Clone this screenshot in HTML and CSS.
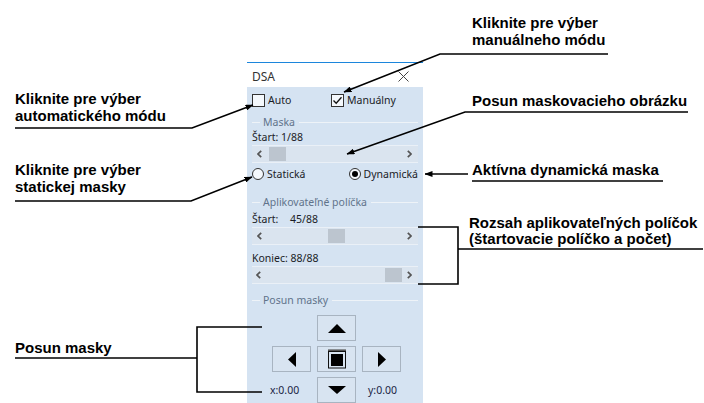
FILE: index.html
```html
<!DOCTYPE html>
<html lang="sk">

<head>
    <meta charset="UTF-8">
    <meta name="viewport" content="width=device-width, initial-scale=1.0">
    <link rel="stylesheet" href="styles.css">
    <title>DSA</title>
</head>

<body>
    <div class="canvas">
        <div class="panel">
            <div class="titlebar">
                <span class="title">DSA</span>
                <svg class="close" width="11" height="11" viewBox="0 0 11 11">
                    <path d="M0.5 0.5 L10.5 10.5 M10.5 0.5 L0.5 10.5" stroke="#444" stroke-width="1" fill="none" />
                </svg>
            </div>
            <div class="content">
                <div class="checks">
                    <label class="check first"><span class="box"></span>Auto</label>
                    <label class="check"><span class="box">
                            <svg width="11" height="11" viewBox="0 0 11 11">
                                <path d="M1.5 5.5 L4.2 8.3 L9.5 2.2" stroke="#111" stroke-width="1.3" fill="none" />
                            </svg>
                        </span>Manuálny</label>
                </div>

                <div class="group">Maska</div>
                <div class="field">Štart: 1/88</div>
                <div class="scroll">
                    <span class="arrow left">
                        <svg width="5" height="8" viewBox="0 0 5 8"><path d="M4.2 0.8 L1 4 L4.2 7.2" stroke="#555" stroke-width="1.7" fill="none" /></svg>
                    </span>
                    <div class="track"><span class="thumb" style="margin-left: 0px"></span></div>
                    <span class="arrow right">
                        <svg width="5" height="8" viewBox="0 0 5 8"><path d="M0.8 0.8 L4 4 L0.8 7.2" stroke="#555" stroke-width="1.7" fill="none" /></svg>
                    </span>
                </div>

                <div class="radios">
                    <label class="radio first"><span class="dot"></span>Statická</label>
                    <label class="radio on"><span class="dot"></span>Dynamická</label>
                </div>

                <div class="group second">Aplikovateľné políčka</div>
                <div class="field tight"><span class="key">Štart:</span>45/88</div>
                <div class="scroll">
                    <span class="arrow left">
                        <svg width="5" height="8" viewBox="0 0 5 8"><path d="M4.2 0.8 L1 4 L4.2 7.2" stroke="#555" stroke-width="1.7" fill="none" /></svg>
                    </span>
                    <div class="track"><span class="thumb" style="margin-left: 58.7px"></span></div>
                    <span class="arrow right">
                        <svg width="5" height="8" viewBox="0 0 5 8"><path d="M0.8 0.8 L4 4 L0.8 7.2" stroke="#555" stroke-width="1.7" fill="none" /></svg>
                    </span>
                </div>
                <div class="field end">Koniec: 88/88</div>
                <div class="scroll">
                    <span class="arrow left">
                        <svg width="5" height="8" viewBox="0 0 5 8"><path d="M4.2 0.8 L1 4 L4.2 7.2" stroke="#555" stroke-width="1.7" fill="none" /></svg>
                    </span>
                    <div class="track"><span class="thumb" style="margin-left: 116px"></span></div>
                    <span class="arrow right">
                        <svg width="5" height="8" viewBox="0 0 5 8"><path d="M0.8 0.8 L4 4 L0.8 7.2" stroke="#555" stroke-width="1.7" fill="none" /></svg>
                    </span>
                </div>

                <div class="group third">Posun masky</div>
                <div class="pad">
                    <button class="pad-btn up">
                        <svg width="18" height="9" viewBox="0 0 18 9"><path d="M9 0 L18 9 L0 9 z" /></svg>
                    </button>
                    <button class="pad-btn left">
                        <svg width="8" height="15" viewBox="0 0 8 15"><path d="M0 7.5 L8 0 L8 15 z" /></svg>
                    </button>
                    <button class="pad-btn center">
                        <svg width="20" height="20" viewBox="0 0 20 20">
                            <path d="M1 1.2 H19" stroke="#555" stroke-width="1.6" />
                            <rect x="1.5" y="2.5" width="17" height="16.5" fill="none" stroke="#111" stroke-width="1" />
                            <rect x="4" y="5" width="12" height="12" fill="#000" />
                        </svg>
                    </button>
                    <button class="pad-btn right">
                        <svg width="8" height="15" viewBox="0 0 8 15"><path d="M8 7.5 L0 0 L0 15 z" /></svg>
                    </button>
                    <span class="coord x">x:0.00</span>
                    <button class="pad-btn down">
                        <svg width="18" height="8" viewBox="0 0 18 8"><path d="M0 0 L18 0 L9 8 z" /></svg>
                    </button>
                    <span class="coord y">y:0.00</span>
                </div>
            </div>
        </div>

        <!-- callouts -->
        <div class="note n-manual">Kliknite pre výber<br>manuálneho módu</div>
        <div class="note n-shift">Posun maskovacieho obrázku</div>
        <div class="note n-active">Aktívna dynamická maska</div>
        <div class="note n-range">Rozsah aplikovateľných políčok<br>(štartovacie políčko a počet)</div>
        <div class="note n-auto">Kliknite pre výber<br>automatického módu</div>
        <div class="note n-static">Kliknite pre výber<br>statickej masky</div>
        <div class="note n-move">Posun masky</div>

        <svg class="leaders" width="704" height="403" viewBox="0 0 704 403">
            <defs>
                <marker id="tip" markerWidth="8" markerHeight="6" refX="7.5" refY="3" orient="auto" markerUnits="userSpaceOnUse">
                    <path d="M0 0 L8 3 L0 6 z" fill="#000" />
                </marker>
            </defs>
            <g stroke="#000" stroke-width="1.6" fill="none">
                <polyline points="608,54 440,54 344,92" marker-end="url(#tip)" />
                <polyline points="688,112 465,112 347,154" marker-end="url(#tip)" />
                <polyline points="468,174 425,174" marker-end="url(#tip)" />
                <polyline points="472,181 663,181" />
                <polyline points="15,128 192,128 253,105" marker-end="url(#tip)" />
                <polyline points="15,201 191,201 252,177" marker-end="url(#tip)" />
                <polyline points="418,227 458,227 458,284 418,284" />
                <polyline points="458,249 703,249" />
                <polyline points="15,358 197,358" />
                <polyline points="262,327 197,327 197,392 262,392" />
            </g>
        </svg>
    </div>
</body>

</html>
```

FILE: styles.css
```css
body {
    margin: 0;
    background: #fff;
    font-family: 'Noto Sans', sans-serif;
}

.canvas {
    position: relative;
    width: 704px;
    height: 403px;
    overflow: hidden;
    padding: 62px 0 0 247px;
    box-sizing: border-box;
}

/* DSA window */
.panel {
    width: 176px;
    height: 360px;
    background: #d5e3f2;
    border-top: 1px solid #1c86dc;
    font-size: 10.5px;
    color: #1a1c26;
}

.titlebar {
    height: 24px;
    background: #fff;
    display: flex;
    align-items: center;
    justify-content: space-between;
    padding: 3px 14px 0 5px;
    box-sizing: border-box;
}

.title {
    font-size: 12px;
    color: #333;
}

.content {
    padding: 6px 5px 0;
}

.checks,
.radios {
    display: flex;
    align-items: center;
    height: 14px;
}

.radios {
    margin-top: 4px;
}

.check,
.radio {
    display: flex;
    align-items: center;
    gap: 3px;
}

.check.first {
    width: 79px;
}

.radio.first {
    width: 98px;
}

.box {
    width: 11px;
    height: 11px;
    border: 1px solid #333;
    background: #f4f8fc;
    display: flex;
}

.dot {
    width: 10px;
    height: 10px;
    border: 1px solid #333;
    border-radius: 50%;
    background: #f4f8fc;
    display: flex;
    align-items: center;
    justify-content: center;
}

.radio.on .dot::after {
    content: "";
    width: 6px;
    height: 6px;
    border-radius: 50%;
    background: #000;
}

.group {
    display: flex;
    align-items: center;
    height: 14px;
    margin-top: 8px;
    color: #61738b;
}

.group::before,
.group::after {
    content: "";
    border-top: 1px solid #eef3f8;
}

.group::before {
    width: 8px;
    margin-right: 3px;
}

.group::after {
    flex: 1;
    margin-left: 4px;
}

.group.second {
    margin-top: 14px;
}

.group.third {
    margin-top: 9px;
}

.field {
    height: 16px;
    line-height: 16px;
}

.field.tight {
    margin-top: 2px;
}

.field.end {
    margin-top: 5px;
}

.key {
    display: inline-block;
    width: 38px;
}

.scroll {
    height: 18px;
    display: flex;
    align-items: center;
    background: #dae4ef;
    border-top: 1px solid #eaf0f7;
    border-bottom: 1px solid #eaf0f7;
    box-sizing: border-box;
}

.arrow {
    width: 17px;
    display: flex;
    justify-content: center;
}

.arrow.left {
    padding-right: 3px;
    box-sizing: border-box;
}

.track {
    flex: 1;
    display: flex;
    align-items: center;
}

.thumb {
    width: 17px;
    height: 14px;
    background: #bcc5cf;
}

/* direction pad */
.pad {
    display: grid;
    grid-template-columns: repeat(3, 39px);
    grid-template-rows: repeat(3, 26px);
    column-gap: 6px;
    row-gap: 5px;
    margin: 8px 0 0 20px;
}

.pad-btn {
    margin: 0;
    padding: 0;
    border: 1px solid #a8b4c1;
    background: #d8e4f1;
    display: flex;
    align-items: center;
    justify-content: center;
}

.pad-btn svg path {
    fill: #000;
}

.pad-btn.center svg path {
    fill: none;
}

.up {
    grid-column: 2;
    grid-row: 1;
}

.left {
    grid-column: 1;
    grid-row: 2;
}

.center {
    grid-column: 2;
    grid-row: 2;
}

.right {
    grid-column: 3;
    grid-row: 2;
}

.down {
    grid-column: 2;
    grid-row: 3;
}

.coord {
    align-self: center;
    color: #1a2444;
}

.coord.x {
    grid-column: 1;
    grid-row: 3;
    margin-left: -2px;
}

.coord.y {
    grid-column: 3;
    grid-row: 3;
    padding-left: 6px;
}

/* callout labels */
.note {
    position: absolute;
    font: bold 15px/17px 'Liberation Sans', Arial, sans-serif;
    color: #000;
    white-space: nowrap;
}

.n-manual {
    left: 472px;
    top: 14px;
}

.n-shift {
    left: 472px;
    top: 92px;
}

.n-active {
    left: 472px;
    top: 161px;
}

.n-range {
    left: 469px;
    top: 215px;
    line-height: 16px;
}

.n-auto {
    left: 15px;
    top: 90px;
}

.n-static {
    left: 15px;
    top: 161px;
}

.n-move {
    left: 15px;
    top: 339px;
}

.leaders {
    position: absolute;
    left: 0;
    top: 0;
}
```
